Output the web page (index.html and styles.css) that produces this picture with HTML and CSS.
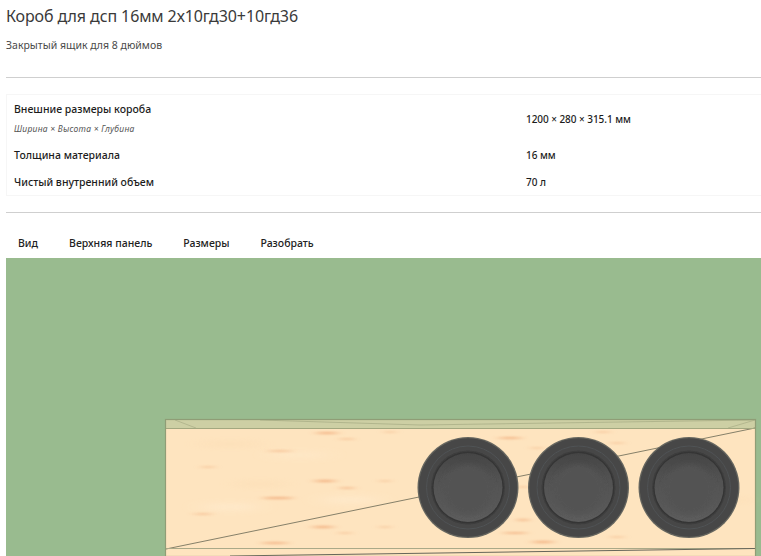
FILE: index.html
```html
<!DOCTYPE html>
<html lang="ru">
<head>
<meta charset="utf-8">
<title>Короб для дсп</title>
<link rel="stylesheet" href="styles.css">
</head>
<body>
<main class="page">
  <header class="head">
    <h1 class="title">Короб для дсп 16мм 2х10гд30+10гд36</h1>
    <p class="subtitle">Закрытый ящик для 8 дюймов</p>
  </header>
  <hr class="rule">
  <section class="specs">
    <div class="row row-tall">
      <div class="label">Внешние размеры короба<small class="hint">Ширина × Высота × Глубина</small></div>
      <div class="value">1200 × 280 × 315.1 мм</div>
    </div>
    <div class="row">
      <div class="label">Толщина материала</div>
      <div class="value">16 мм</div>
    </div>
    <div class="row">
      <div class="label">Чистый внутренний объем</div>
      <div class="value">70 л</div>
    </div>
  </section>
  <hr class="rule rule-second">
  <nav class="tabs">
    <a class="tab">Вид</a>
    <a class="tab">Верхняя панель</a>
    <a class="tab">Размеры</a>
    <a class="tab">Разобрать</a>
  </nav>
  <div class="scene">
    <svg class="model" width="755" height="298" viewBox="6 258 755 298" xmlns="http://www.w3.org/2000/svg">
      <defs>
        <filter id="b1" x="-50%" y="-300%" width="200%" height="700%"><feGaussianBlur stdDeviation="5 1"/></filter>
        <filter id="b2" x="-50%" y="-300%" width="200%" height="700%"><feGaussianBlur stdDeviation="10 3"/></filter>
        <filter id="b3" x="-20%" y="-20%" width="140%" height="140%"><feGaussianBlur stdDeviation="2.5"/></filter>
        <filter id="b4" x="-5%" y="-5%" width="110%" height="110%"><feGaussianBlur stdDeviation="0.6"/></filter>
        <linearGradient id="cone" x1="0" y1="0" x2="0" y2="1">
          <stop offset="0" stop-color="#444444"/>
          <stop offset="0.3" stop-color="#505050"/>
          <stop offset="1" stop-color="#5c5c5c"/>
        </linearGradient>
        <g id="spk" filter="url(#b4)">
          <circle r="50.5" fill="#66665f"/>
          <circle r="49.2" fill="#474747"/>
          <circle r="41.5" fill="none" stroke="#505355" stroke-width="1"/>
          <circle r="37" fill="#3e3e3e"/>
          <circle r="35.8" fill="#343434"/>
          <circle r="34.5" fill="url(#cone)"/>
          <circle cy="2" r="25" fill="#525252" filter="url(#b3)"/>
        </g>
      </defs>
      <rect x="165" y="419" width="591" height="137" fill="#fee4bf"/>
      <g fill="#fff0d8" filter="url(#b2)" opacity="0.55">
        <ellipse cx="230" cy="507" rx="30" ry="3"/>
        <ellipse cx="350" cy="500" rx="30" ry="3"/>
        <ellipse cx="300" cy="455" rx="30" ry="2"/>
      </g>
      <g fill="#f7d2a4" filter="url(#b2)" opacity="0.45">
        <ellipse cx="230" cy="444" rx="35" ry="1.5"/>
        <ellipse cx="260" cy="484" rx="30" ry="1.5"/>
        <ellipse cx="735" cy="500" rx="18" ry="1.5"/>
      </g>
      <g fill="#ee9f6c" filter="url(#b1)" opacity="0.62">
        <ellipse cx="327" cy="433" rx="11" ry="1.3"/>
        <ellipse cx="347" cy="439" rx="7" ry="0.8"/>
        <ellipse cx="390" cy="432" rx="5" ry="0.8"/>
        <ellipse cx="280" cy="451" rx="12" ry="0.8"/>
        <ellipse cx="208" cy="467" rx="6" ry="0.8"/>
        <ellipse cx="325" cy="481" rx="11" ry="1.5"/>
        <ellipse cx="347" cy="488" rx="7" ry="0.9"/>
        <ellipse cx="385" cy="481" rx="5" ry="0.8"/>
        <ellipse cx="278" cy="498" rx="15" ry="1.3"/>
        <ellipse cx="203" cy="514" rx="9" ry="0.8"/>
        <ellipse cx="323" cy="527" rx="11" ry="1.4"/>
        <ellipse cx="345" cy="533" rx="6" ry="0.8"/>
        <ellipse cx="385" cy="527" rx="5" ry="0.8"/>
        <ellipse cx="275" cy="543" rx="14" ry="1.2"/>
        <ellipse cx="510" cy="438" rx="12" ry="1.2"/>
        <ellipse cx="603" cy="432" rx="6" ry="0.7"/>
        <ellipse cx="617" cy="443" rx="6" ry="0.8"/>
        <ellipse cx="537" cy="448" rx="5" ry="0.8"/>
        <ellipse cx="523" cy="487" rx="3" ry="1.2"/>
        <ellipse cx="523" cy="520" rx="5" ry="1.4"/>
        <ellipse cx="515" cy="533" rx="12" ry="1"/>
        <ellipse cx="543" cy="542" rx="11" ry="1.5"/>
        <ellipse cx="617" cy="537" rx="6" ry="0.7"/>
      </g>
      <polygon points="166,420 755,420 755,428 166,428" fill="#cdcfa4"/>
      <polyline points="175,420 196,428" fill="none" stroke="#adb189" stroke-width="0.8"/>
      <polyline points="260,420 420,425 755,420" fill="none" stroke="#aaae86" stroke-width="0.8"/>
      <polyline points="728,428 755,420" fill="none" stroke="#adb189" stroke-width="0.8"/>
      <line x1="166" y1="549" x2="755" y2="428" stroke="#77745f" stroke-width="0.9"/>
      <rect x="166" y="428" width="589" height="1" fill="#a3a880"/>
      <rect x="166" y="548" width="589" height="1" fill="#aaa988"/>
      <line x1="230" y1="556" x2="755" y2="548.5" stroke="#66665a" stroke-width="1"/>
      <rect x="165.5" y="419.5" width="590" height="137" fill="none" stroke="#8f9d76" stroke-width="1.2"/>
      <use href="#spk" x="468" y="487.5"/>
      <use href="#spk" x="578.5" y="487.5"/>
      <use href="#spk" x="689" y="487.5"/>
    </svg>
  </div>
</main>
</body>
</html>
```
FILE: styles.css
```css
* { box-sizing: border-box; }
html, body { margin: 0; height: 100%; overflow: hidden; background: #fff; }
body { font-family: "Noto Sans", "Open Sans", sans-serif; color: #222; }
.page { width: 761px; height: 556px; padding-left: 6px; display: flex; flex-direction: column; overflow: hidden; }
.head { height: 77px; padding-top: 5px; }
.title { margin: 0; font-size: 16px; line-height: 22px; font-weight: 400; letter-spacing: -0.1px; color: #3a3a3a; }
.subtitle { margin: 11px 0 0; font-size: 10.5px; line-height: 14px; color: #4a4a4a; }
.rule { margin: 0; height: 1px; border: 0; background: #cfcfcf; flex: none; }
.specs { margin-top: 16px; height: 102px; border: 1px solid #f6f6f6; border-right: 0; padding-top: 2px; flex: none; font-size: 10.5px; color: #1c1c1c; font-weight: 500; }
.row { display: grid; grid-template-columns: 512px 1fr; align-items: center; height: 27px; padding-left: 7px; }
.row-tall { height: 43px; }
.row-tall .label { margin-bottom: 2px; }
.row-tall + .row { margin-top: 1px; }
.value { font-size: 10px; letter-spacing: -0.05px; }
.hint { display: block; margin-top: 7px; font-size: 8.5px; line-height: 11px; font-style: italic; font-weight: 400; letter-spacing: 0.25px; color: #555; }
.rule-second { margin-top: 16px; }
.tabs { display: flex; height: 45px; padding: 23px 0 0 12px; gap: 31px; font-size: 10.5px; font-weight: 500; color: #222; flex: none; }
.tab { display: block; line-height: 14px; }
.scene { flex: 1; background: #99bb8f; overflow: hidden; }
.model { display: block; }
```
